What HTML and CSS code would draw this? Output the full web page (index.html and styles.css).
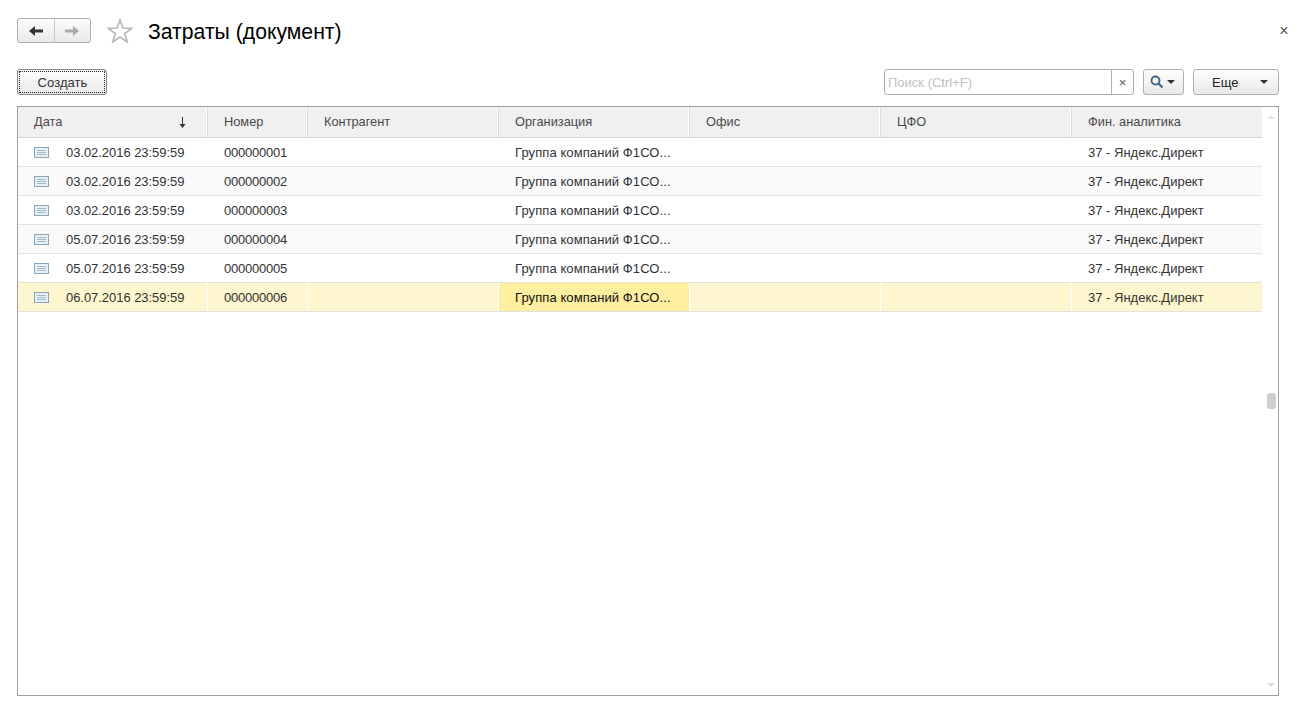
FILE: index.html
```html
<!DOCTYPE html>
<html lang="ru">
<head>
<meta charset="utf-8">
<title>Затраты (документ)</title>
<link rel="stylesheet" href="styles.css">
</head>
<body>
<header class="titlebar">
  <div class="nav-group">
    <button class="nav-btn"><svg width="16" height="12" viewBox="0 0 16 12"><path d="M1 6 L7 1 V4.5 H15 V7.5 H7 V11 Z" fill="#333"/></svg></button>
    <button class="nav-btn nav-next"><svg width="16" height="12" viewBox="0 0 16 12"><path d="M15 6 L9 1 V4.5 H1 V7.5 H9 V11 Z" fill="#aaa"/></svg></button>
  </div>
  <svg class="star" width="26" height="26" viewBox="0 0 26 26"><path d="M13 2 L16 10 L24.5 10.3 L17.8 15.6 L20.2 24 L13 19.2 L5.8 24 L8.2 15.6 L1.5 10.3 L10 10 Z" fill="#fff" stroke="#b4b4b4" stroke-width="1.6"/></svg>
  <h1 class="title">Затраты (документ)</h1>
  <span class="close">×</span>
</header>
<div class="toolbar">
  <button class="btn btn-create"><span class="focus">Создать</span></button>
  <div class="search">
    <span class="search-input">Поиск (Ctrl+F)</span>
    <span class="search-clear">×</span>
  </div>
  <button class="btn btn-find">
    <svg width="14" height="14" viewBox="0 0 14 14"><circle cx="5.5" cy="5.5" r="4" fill="none" stroke="#3f6388" stroke-width="1.8"/><path d="M8.5 8.5 L12.5 12.5" stroke="#3f6388" stroke-width="2.2"/></svg>
    <i class="caret"></i>
  </button>
  <button class="btn btn-more"><span>Еще</span><i class="caret"></i></button>
</div>
<main class="table">
  <div class="head">
    <div class="cell head-date"><span>Дата</span><svg class="sort" width="7" height="11" viewBox="0 0 7 11"><path d="M3.5 0V9" stroke="#333"/><path d="M0.5 7H6.5L3.5 11Z" fill="#333"/></svg></div>
    <div class="cell">Номер</div>
    <div class="cell">Контрагент</div>
    <div class="cell">Организация</div>
    <div class="cell">Офис</div>
    <div class="cell">ЦФО</div>
    <div class="cell">Фин. аналитика</div>
  </div>
  <div class="row">
    <div class="cell date"><svg class="doc" width="16" height="12" viewBox="0 0 16 12"><use href="#doc-icon"/></svg>03.02.2016 23:59:59</div>
    <div class="cell num">000000001</div><div class="cell"></div><div class="cell org">Группа компаний Ф1СО...</div><div class="cell"></div><div class="cell"></div><div class="cell">37 - Яндекс.Директ</div>
  </div>
  <div class="row alt">
    <div class="cell date"><svg class="doc" width="16" height="12" viewBox="0 0 16 12"><use href="#doc-icon"/></svg>03.02.2016 23:59:59</div>
    <div class="cell num">000000002</div><div class="cell"></div><div class="cell org">Группа компаний Ф1СО...</div><div class="cell"></div><div class="cell"></div><div class="cell">37 - Яндекс.Директ</div>
  </div>
  <div class="row">
    <div class="cell date"><svg class="doc" width="16" height="12" viewBox="0 0 16 12"><use href="#doc-icon"/></svg>03.02.2016 23:59:59</div>
    <div class="cell num">000000003</div><div class="cell"></div><div class="cell org">Группа компаний Ф1СО...</div><div class="cell"></div><div class="cell"></div><div class="cell">37 - Яндекс.Директ</div>
  </div>
  <div class="row alt">
    <div class="cell date"><svg class="doc" width="16" height="12" viewBox="0 0 16 12"><use href="#doc-icon"/></svg>05.07.2016 23:59:59</div>
    <div class="cell num">000000004</div><div class="cell"></div><div class="cell org">Группа компаний Ф1СО...</div><div class="cell"></div><div class="cell"></div><div class="cell">37 - Яндекс.Директ</div>
  </div>
  <div class="row">
    <div class="cell date"><svg class="doc" width="16" height="12" viewBox="0 0 16 12"><use href="#doc-icon"/></svg>05.07.2016 23:59:59</div>
    <div class="cell num">000000005</div><div class="cell"></div><div class="cell org">Группа компаний Ф1СО...</div><div class="cell"></div><div class="cell"></div><div class="cell">37 - Яндекс.Директ</div>
  </div>
  <div class="row selected">
    <div class="cell date"><svg class="doc" width="16" height="12" viewBox="0 0 16 12"><use href="#doc-icon"/></svg>06.07.2016 23:59:59</div>
    <div class="cell num">000000006</div><div class="cell"></div><div class="cell org current">Группа компаний Ф1СО...</div><div class="cell"></div><div class="cell"></div><div class="cell">37 - Яндекс.Директ</div>
  </div>
  <i class="scroll-up"></i>
  <i class="scroll-thumb"></i>
  <i class="scroll-down"></i>
</main>
<svg class="defs" width="0" height="0"><defs><g id="doc-icon"><rect x="0.5" y="0.5" width="14" height="10" fill="#e6f0f8" stroke="#8aa4ba"/><path d="M3 3.5H12M3 5.5H12M3 7.5H12" stroke="#a3b8c9"/></g></defs></svg>
</body>
</html>
```
FILE: styles.css
```css
* { box-sizing: border-box; }
html, body { margin: 0; padding: 0; }
body {
  width: 1303px;
  height: 707px;
  overflow: hidden;
  padding: 18px 24px 0 17px;
  background: #fff;
  font: 13px/14px "Liberation Sans", Arial, sans-serif;
  color: #333;
}
button { font: inherit; color: inherit; padding: 0; cursor: default; }

.titlebar { display: flex; align-items: flex-start; height: 26px; }
.nav-group {
  display: flex;
  width: 74px;
  height: 25px;
  border: 1px solid #b0b0b0;
  border-radius: 3px;
  background: linear-gradient(#fdfdfd, #e9e9e9);
}
.nav-btn {
  flex: 1;
  display: flex;
  align-items: center;
  justify-content: center;
  border: 0;
  background: none;
}
.nav-next { border-left: 1px solid #c8c8c8; }
.star { margin-left: 16px; }
.title {
  margin: 1px 0 0 15px;
  font-size: 21.2px;
  line-height: 26px;
  font-weight: 400;
  color: #000;
  flex: 1;
}
.close { font-size: 16px; line-height: 26px; color: #555; width: 14px; margin-right: -12px; text-align: center; }

.toolbar { display: flex; align-items: center; height: 26px; margin-top: 25px; }
.btn {
  height: 26px;
  border: 1px solid #b0b0b0;
  border-radius: 3px;
  background: linear-gradient(#fefefe, #e8e8e8);
  display: flex;
  align-items: center;
}
.btn-create { width: 90px; padding: 1px; margin-right: auto; border-color: #888; }
.focus {
  display: block;
  width: 100%;
  height: 100%;
  border: 1px dotted #222;
  line-height: 22px;
  text-align: center;
  padding-left: 1px;
  letter-spacing: 0.05px;
}
.search {
  display: flex;
  width: 250px;
  height: 26px;
  border: 1px solid #b0b0b0;
  border-radius: 3px;
  background: #fff;
  margin-right: 9px;
}
.search-input { flex: 1; padding-left: 3px; line-height: 26px; color: #c0c0c0; }
.search-clear { width: 22px; border-left: 1px solid #b0b0b0; text-align: center; line-height: 26px; color: #555; }
.btn-find { width: 41px; margin-right: 9px; padding-left: 6px; gap: 3px; }
.caret { display: block; width: 0; height: 0; border-left: 4px solid transparent; border-right: 4px solid transparent; border-top: 4px solid #333; }
.btn-more { width: 86px; padding: 1px 0 0 18px; color: #222; }
.btn-more span { flex: 1; text-align: left; }
.btn-more .caret { margin-right: 10px; margin-top: -1px; }

.table {
  position: relative;
  height: 590px;
  margin-top: 11px;
  border: 1px solid #a0a0a0;
}
.head, .row {
  display: grid;
  grid-template-columns: 190px 100px 191px 191px 191px 191px 190px;
  width: 1244px;
}
.head {
  height: 31px;
  background: #f0f0f0;
  border-bottom: 1px solid #d4d4d4;
  color: #4a4a4a;
}
.head .cell { font-size: 12.8px; line-height: 30px; border-right: 1px solid #dcdcdc; box-shadow: inset -1px 0 0 #fff; }
.head .cell:last-child { border-right: 0; box-shadow: none; }
.head-date { display: flex; justify-content: space-between; align-items: center; padding-right: 21px; }
.sort { flex: none; }
.cell { padding-left: 16px; white-space: nowrap; overflow: hidden; }
.row { height: 29px; grid-template-rows: 28px; border-bottom: 1px solid #e2e2e2; }
.row .cell { padding-top: 1px; line-height: 28px; }
.alt { background: #fafafa; }
.selected { background: #fdf6cf; }
.selected .cell { border-right: 1px solid #fff; }
.selected .cell:last-child { border-right: 0; }
.selected .current { background: #fdeea0; color: #111; }
.row .date { display: flex; align-items: center; padding-top: 2px; line-height: 14px; letter-spacing: -0.05px; }
.num { letter-spacing: -0.23px; }
.org { letter-spacing: 0.09px; }
.doc { margin-right: 16px; flex: none; }

.scroll-up, .scroll-down {
  position: absolute;
  right: 3px;
  width: 0;
  height: 0;
  border-left: 4px solid transparent;
  border-right: 4px solid transparent;
}
.scroll-up { top: 8px; border-bottom: 4px solid #e4e4e4; }
.scroll-down { bottom: 8px; border-top: 4px solid #dcdcdc; }
.scroll-thumb {
  position: absolute;
  top: 286px;
  right: 2px;
  width: 9px;
  height: 16px;
  border-radius: 3px;
  background: #cfcfcf;
}
.defs { position: absolute; }
```
